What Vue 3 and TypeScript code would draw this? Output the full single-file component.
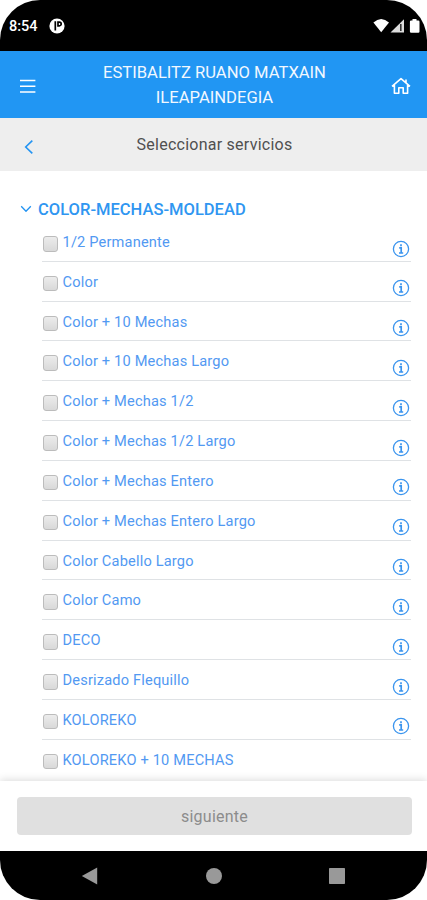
<script setup lang="ts">
interface Service {
  name: string
  info: boolean
}

const names: string[] = [
  '1/2 Permanente',
  'Color',
  'Color + 10 Mechas',
  'Color + 10 Mechas Largo',
  'Color + Mechas 1/2',
  'Color + Mechas 1/2 Largo',
  'Color + Mechas Entero',
  'Color + Mechas Entero Largo',
  'Color Cabello Largo',
  'Color Camo',
  'DECO',
  'Desrizado Flequillo',
  'KOLOREKO',
  'KOLOREKO + 10 MECHAS',
]

const services: Service[] = names.map((name, i) => ({ name, info: i < names.length - 1 }))
</script>

<template>
  <div class="phone">
    <div class="status">
      <span class="time">8:54</span>
      <svg class="app-badge" viewBox="0 0 16 16">
        <circle cx="8" cy="8" r="7.6" fill="#fff" />
        <path d="M6.3 3.3V12.6M9 8.8V4.2h1.4a1.7 1.7 0 0 1 0 3.6H9" fill="none" stroke="#000" stroke-width="1.7" />
      </svg>
      <svg class="signals" viewBox="0 0 48 16">
        <path d="M0.4 4.6Q8.2-2.4 16 4.6L8.2 14.2Z" fill="#fff" />
        <path d="M17.5 14.6L31 1.2V14.6Z" fill="#ddd" />
        <path d="M27.8 6v7" stroke="#333" stroke-width="1.6" />
        <path d="M39.5 1h4v1.5h1.8q1.2 0 1.2 1.2v9.8q0 1.3-1.2 1.3h-7.1q-1.3 0-1.3-1.3V3.7q0-1.2 1.3-1.2h1.3z" fill="#fff" />
      </svg>
    </div>

    <header class="header">
      <svg class="menu" viewBox="0 0 16 14">
        <path d="M0 1.4h15.4M0 7.2h15.4M0 13h15.4" stroke="#fff" stroke-width="1.5" />
      </svg>
      <h1 class="title">ESTIBALITZ RUANO MATXAIN ILEAPAINDEGIA</h1>
      <svg class="home" viewBox="0 0 20 18">
        <path d="M1 9.3L10 1.6l9 7.7M15 5.4V2.6M3.4 8v8.2h4.4v-5.4h4.4v5.4h4.4V8" fill="none" stroke="#fff" stroke-width="1.6" stroke-linejoin="round" />
      </svg>
    </header>

    <div class="subheader">
      <svg class="back" viewBox="0 0 10 16">
        <path d="M8.3 1.6L1.7 8l6.6 6.4" fill="none" stroke="#2494f2" stroke-width="1.6" />
      </svg>
      <span class="subtitle">Seleccionar servicios</span>
    </div>

    <main class="content">
      <div class="group">
        <svg class="chevron" viewBox="0 0 12 8">
          <path d="M1.2 1.2L6 6.2l4.8-5" fill="none" stroke="#2494f2" stroke-width="1.3" />
        </svg>
        <h2 class="group-name">COLOR-MECHAS-MOLDEAD</h2>
      </div>
      <ul class="list">
        <li v-for="s in services" :key="s.name" class="row">
          <span class="box"></span>
          <span class="name">{{ s.name }}</span>
          <svg v-if="s.info" class="info" viewBox="0 0 18 18">
            <circle cx="9" cy="9" r="7.6" fill="none" stroke="#3a94ee" stroke-width="1.3" />
            <path d="M9 4.3v2M7.2 7.9H9.2v4.8M7 13h4.2" fill="none" stroke="#3a94ee" stroke-width="1.7" />
          </svg>
        </li>
      </ul>
    </main>

    <footer class="footer">
      <button class="next" disabled>siguiente</button>
    </footer>

    <nav class="nav">
      <svg viewBox="0 0 18 18"><path d="M0.8 9L16.2 0.4v17.2z" fill="#999" /></svg>
      <svg viewBox="0 0 18 18"><circle cx="9" cy="9" r="8" fill="#999" /></svg>
      <svg viewBox="0 0 18 18"><rect x="1" y="0.9" width="16" height="16.2" rx="0.8" fill="#999" /></svg>
    </nav>
  </div>
</template>

<style>
body {
  background: #fff;
}
</style>

<style scoped>
.phone {
  width: 427px;
  height: 900px;
  display: flex;
  flex-direction: column;
  overflow: hidden;
  border-radius: 40px;
  background: #fff;
  font-family: Roboto, "Liberation Sans", sans-serif;
}
svg {
  display: block;
  flex: none;
}
.status {
  height: 51px;
  flex: none;
  box-sizing: border-box;
  padding: 1px 6px 0 9px;
  display: flex;
  align-items: center;
  background: #000;
}
.time {
  width: 39.5px;
  color: #fff;
  font-size: 14.5px;
  font-weight: 500;
}
.app-badge {
  width: 16px;
  height: 16px;
}
.signals {
  width: 48px;
  height: 16px;
  margin-left: auto;
}
.header {
  height: 67px;
  flex: none;
  box-sizing: border-box;
  padding: 2px 16px 0 20px;
  display: flex;
  align-items: center;
  justify-content: space-between;
  background: #2196f3;
}
.menu {
  width: 16px;
  height: 14px;
}
.title {
  width: 250px;
  margin: -2px 0 0 2px;
  color: #f1f8ff;
  font-size: 16.6px;
  font-weight: 400;
  line-height: 25px;
  text-align: center;
}
.home {
  width: 20px;
  height: 18px;
}
.subheader {
  height: 53px;
  flex: none;
  box-sizing: border-box;
  padding: 0 24px;
  display: grid;
  grid-template-columns: 10px 1fr 10px;
  align-items: center;
  background: #eee;
}
.back {
  width: 10px;
  height: 16px;
  margin-top: 5px;
}
.subtitle {
  padding-left: 2px;
  color: #505050;
  font-size: 16px;
  letter-spacing: 0.25px;
  text-align: center;
  line-height: 20px;
}
.content {
  height: 610px;
  flex: none;
  overflow: hidden;
}
.group {
  height: 51px;
  box-sizing: border-box;
  padding: 25px 0 0 20px;
  display: flex;
  align-items: center;
  gap: 6px;
}
.chevron {
  width: 12px;
  height: 8px;
}
.group-name {
  margin: 1px 0 0;
  color: #2f96f1;
  font-size: 16.55px;
  font-weight: 500;
  line-height: 26px;
}
.list {
  margin: 0;
  padding: 0 16px 0 42px;
  list-style: none;
}
.row {
  height: 39.83px;
  box-sizing: border-box;
  border-bottom: 1px solid #dfe2e5;
  display: flex;
  align-items: flex-start;
}
.row:last-child {
  border-bottom: 0;
}
.box {
  width: 15.5px;
  height: 15.5px;
  flex: none;
  box-sizing: border-box;
  margin: 14px 4.5px 0 0.5px;
  border: 1px solid #bcbcbc;
  border-radius: 3px;
  background: linear-gradient(#ececec, #d9d9d9);
}
.name {
  flex: 1;
  padding-top: 9.9px;
  color: #5299f2;
  font-size: 14.6px;
  line-height: 20px;
  letter-spacing: 0.18px;
  white-space: nowrap;
}
.info {
  width: 18px;
  height: 18px;
  margin: 17.5px 1px 0 0;
}
.footer {
  position: relative;
  height: 70px;
  flex: none;
  box-sizing: border-box;
  padding: 16px 15px 0 17px;
  background: #fff;
  box-shadow: 0 -1px 8px rgba(0, 0, 0, 0.15);
}
.next {
  display: block;
  width: 100%;
  height: 38px;
  padding: 0;
  border: 0;
  border-radius: 4px;
  background: #e0e0e0;
  color: #8c8c8c;
  font-family: inherit;
  font-size: 16px;
  letter-spacing: 0.25px;
}
.nav {
  position: relative;
  height: 49px;
  flex: none;
  box-sizing: border-box;
  padding: 0 81px;
  display: flex;
  align-items: center;
  justify-content: space-between;
  background: #000;
}
.nav svg {
  width: 18px;
  height: 18px;
}
</style>
